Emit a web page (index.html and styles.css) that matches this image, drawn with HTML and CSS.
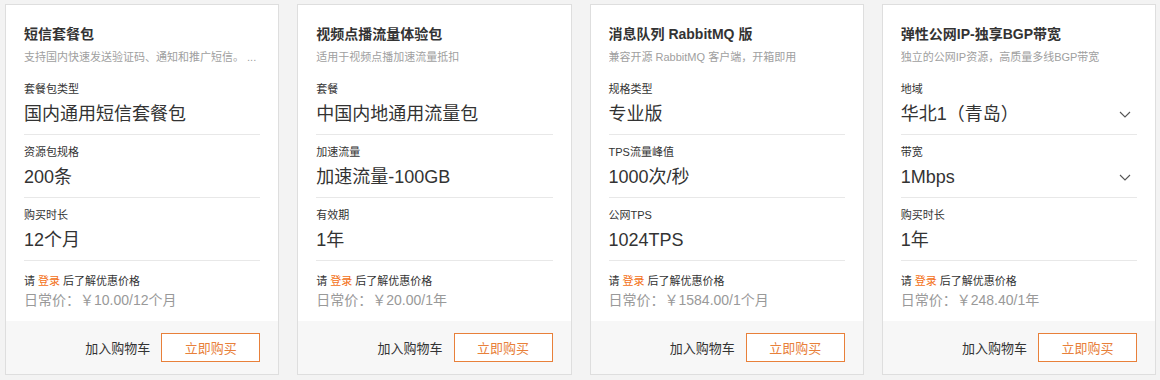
FILE: index.html
```html
<!DOCTYPE html>
<html lang="zh-CN">
<head>
    <meta charset="UTF-8">
    <title>云产品套餐</title>
    <link rel="stylesheet" href="styles.css">
</head>
<body>
    <div class="cards">
        <div class="card">
            <div class="card-body">
                <h3 class="card-title">短信套餐包</h3>
                <p class="card-desc">支持国内快速发送验证码、通知和推广短信。 ...</p>
                <div class="field">
                    <div class="field-label">套餐包类型</div>
                    <div class="field-value">国内通用短信套餐包</div>
                </div>
                <div class="field">
                    <div class="field-label">资源包规格</div>
                    <div class="field-value">200条</div>
                </div>
                <div class="field">
                    <div class="field-label">购买时长</div>
                    <div class="field-value">12个月</div>
                </div>
                <p class="login-tip">请 <a href="#" class="login-link">登录</a> 后了解优惠价格</p>
                <p class="price">日常价：￥10.00/12个月</p>
            </div>
            <div class="card-footer">
                <a href="#" class="cart-link">加入购物车</a>
                <button class="buy-button">立即购买</button>
            </div>
        </div>

        <div class="card">
            <div class="card-body">
                <h3 class="card-title">视频点播流量体验包</h3>
                <p class="card-desc">适用于视频点播加速流量抵扣</p>
                <div class="field">
                    <div class="field-label">套餐</div>
                    <div class="field-value">中国内地通用流量包</div>
                </div>
                <div class="field">
                    <div class="field-label">加速流量</div>
                    <div class="field-value">加速流量-100GB</div>
                </div>
                <div class="field">
                    <div class="field-label">有效期</div>
                    <div class="field-value">1年</div>
                </div>
                <p class="login-tip">请 <a href="#" class="login-link">登录</a> 后了解优惠价格</p>
                <p class="price">日常价：￥20.00/1年</p>
            </div>
            <div class="card-footer">
                <a href="#" class="cart-link">加入购物车</a>
                <button class="buy-button">立即购买</button>
            </div>
        </div>

        <div class="card">
            <div class="card-body">
                <h3 class="card-title">消息队列 RabbitMQ 版</h3>
                <p class="card-desc">兼容开源 RabbitMQ 客户端，开箱即用</p>
                <div class="field">
                    <div class="field-label">规格类型</div>
                    <div class="field-value">专业版</div>
                </div>
                <div class="field">
                    <div class="field-label">TPS流量峰值</div>
                    <div class="field-value">1000次/秒</div>
                </div>
                <div class="field">
                    <div class="field-label">公网TPS</div>
                    <div class="field-value">1024TPS</div>
                </div>
                <p class="login-tip">请 <a href="#" class="login-link">登录</a> 后了解优惠价格</p>
                <p class="price">日常价：￥1584.00/1个月</p>
            </div>
            <div class="card-footer">
                <a href="#" class="cart-link">加入购物车</a>
                <button class="buy-button">立即购买</button>
            </div>
        </div>

        <div class="card">
            <div class="card-body">
                <h3 class="card-title">弹性公网IP-独享BGP带宽</h3>
                <p class="card-desc">独立的公网IP资源，高质量多线BGP带宽</p>
                <div class="field">
                    <div class="field-label">地域</div>
                    <div class="field-value select">
                        <span>华北1（青岛）</span>
                        <svg class="chevron" width="12" height="7" viewBox="0 0 12 7"><path d="M1 1l5 5 5-5" fill="none" stroke="#555" stroke-width="1.1"/></svg>
                    </div>
                </div>
                <div class="field">
                    <div class="field-label">带宽</div>
                    <div class="field-value select">
                        <span>1Mbps</span>
                        <svg class="chevron" width="12" height="7" viewBox="0 0 12 7"><path d="M1 1l5 5 5-5" fill="none" stroke="#555" stroke-width="1.1"/></svg>
                    </div>
                </div>
                <div class="field">
                    <div class="field-label">购买时长</div>
                    <div class="field-value">1年</div>
                </div>
                <p class="login-tip">请 <a href="#" class="login-link">登录</a> 后了解优惠价格</p>
                <p class="price">日常价：￥248.40/1年</p>
            </div>
            <div class="card-footer">
                <a href="#" class="cart-link">加入购物车</a>
                <button class="buy-button">立即购买</button>
            </div>
        </div>
    </div>
</body>
</html>
```

FILE: styles.css
```css
body {
    margin: 0;
    background-color: #f3f3f3;
    font-family: "Liberation Sans", "Noto Sans CJK SC", sans-serif;
    color: #333;
}
.cards {
    display: grid;
    grid-template-columns: repeat(4, minmax(0, 1fr));
    gap: 18px;
    padding: 4px 4px 0 5px;
}
.card {
    height: 371px;
    box-sizing: border-box;
    background-color: #fff;
    border: 1px solid #dedede;
    display: flex;
    flex-direction: column;
    min-width: 0;
}
.card-body {
    flex: 1;
    padding: 19px 18px 0 18px;
}
.card-title {
    margin: 0;
    font-size: 14px;
    line-height: 20px;
    font-weight: bold;
    color: #333;
}
.card-desc {
    margin: 4px 0 0 0;
    font-size: 11px;
    line-height: 18px;
    color: #a0a0a0;
    white-space: nowrap;
    overflow: hidden;
    text-overflow: ellipsis;
}
.field {
    padding-top: 8px;
    border-bottom: 1px solid #e8e8e8;
}
.field:first-of-type {
    padding-top: 14px;
}
.field-label {
    font-size: 11px;
    line-height: 18px;
    color: #333;
}
.field-value {
    margin-top: 3px;
    padding-bottom: 7px;
    font-size: 18px;
    line-height: 26px;
    color: #333;
}
.select {
    display: flex;
    justify-content: space-between;
    align-items: center;
}
.chevron {
    margin-right: 6px;
}

/* Price area */
.login-tip {
    margin: 11px 0 0 0;
    font-size: 11px;
    line-height: 18px;
    color: #333;
}
.login-link {
    color: #f36f15;
    text-decoration: none;
}
.price {
    margin: 0;
    font-size: 14px;
    line-height: 20px;
    color: #999;
}

/* Footer */
.card-footer {
    height: 53px;
    background-color: #f7f7f7;
    display: flex;
    align-items: center;
    justify-content: flex-end;
    padding-right: 18px;
}
.cart-link {
    font-size: 13px;
    color: #333;
    text-decoration: none;
    margin-right: 11px;
}
.buy-button {
    width: 99px;
    height: 29px;
    background-color: #fff;
    border: 1px solid #e8803a;
    color: #e8803a;
    font-family: inherit;
    font-size: 13px;
    cursor: pointer;
}
```
